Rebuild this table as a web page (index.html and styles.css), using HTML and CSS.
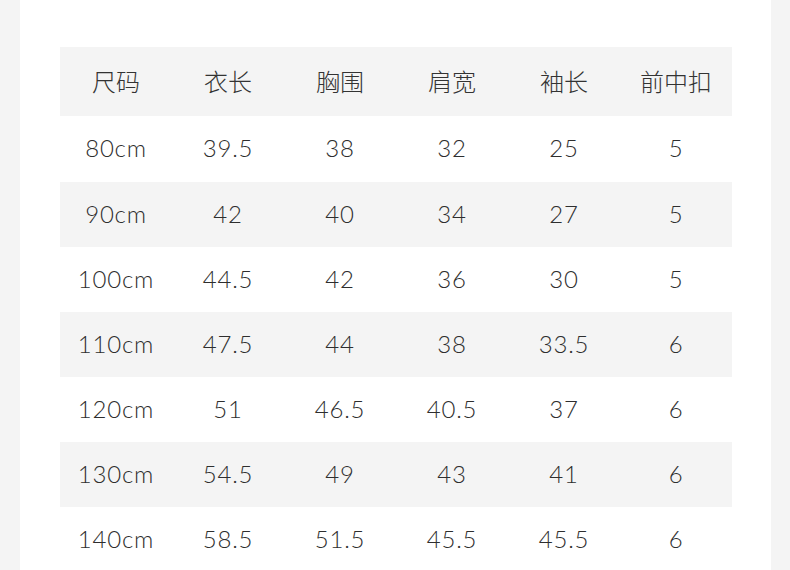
FILE: index.html
```html
<!DOCTYPE html>
<html lang="zh-CN">
<head>
<meta charset="utf-8">
<title>尺码表</title>
<link rel="stylesheet" href="styles.css">
</head>
<body>
<div class="page">
  <div class="strip"></div>
  <main class="content">
    <table class="size-table">
      <thead>
        <tr><th>尺码</th><th>衣长</th><th>胸围</th><th>肩宽</th><th>袖长</th><th>前中扣</th></tr>
      </thead>
      <tbody>
        <tr><td>80cm</td><td>39.5</td><td>38</td><td>32</td><td>25</td><td>5</td></tr>
        <tr><td>90cm</td><td>42</td><td>40</td><td>34</td><td>27</td><td>5</td></tr>
        <tr><td>100cm</td><td>44.5</td><td>42</td><td>36</td><td>30</td><td>5</td></tr>
        <tr><td>110cm</td><td>47.5</td><td>44</td><td>38</td><td>33.5</td><td>6</td></tr>
        <tr><td>120cm</td><td>51</td><td>46.5</td><td>40.5</td><td>37</td><td>6</td></tr>
        <tr><td>130cm</td><td>54.5</td><td>49</td><td>43</td><td>41</td><td>6</td></tr>
        <tr><td>140cm</td><td>58.5</td><td>51.5</td><td>45.5</td><td>45.5</td><td>6</td></tr>
      </tbody>
    </table>
  </main>
  <div class="strip"></div>
</div>
</body>
</html>
```

FILE: styles.css
```css
html, body {
  margin: 0;
  padding: 0;
  background: #ffffff;
}

.page {
  display: flex;
  width: 790px;
  height: 570px;
  overflow: hidden;
}

.strip {
  width: 20px;
  flex: 0 0 auto;
  background: #f4f4f4;
}

.strip:last-child {
  width: 19px;
}

.content {
  flex: 1 1 auto;
  padding: 47px 0 0 40px;
  background: #ffffff;
}

.size-table {
  width: 672px;
  border-collapse: collapse;
  table-layout: fixed;
  font-family: "Lato", "Noto Sans CJK SC", sans-serif;
  color: #2e2e2e;
}

.size-table th,
.size-table td {
  padding: 0;
  text-align: center;
  vertical-align: middle;
  font-weight: 300;
  font-size: 24px;
  letter-spacing: 0.8px;
}

.size-table th {
  height: 69px;
  padding-bottom: 2px;
  box-sizing: border-box;
  font-family: "Noto Sans CJK SC", sans-serif;
  font-weight: 300;
  letter-spacing: 0;
  color: #333333;
  background: #f4f4f4;
}

.size-table td {
  height: 65px;
  padding-bottom: 3px;
  box-sizing: border-box;
}

.size-table tbody tr:first-child td {
  height: 66px;
}

.size-table tbody tr:nth-child(even) td {
  background: #f4f4f4;
}
```
